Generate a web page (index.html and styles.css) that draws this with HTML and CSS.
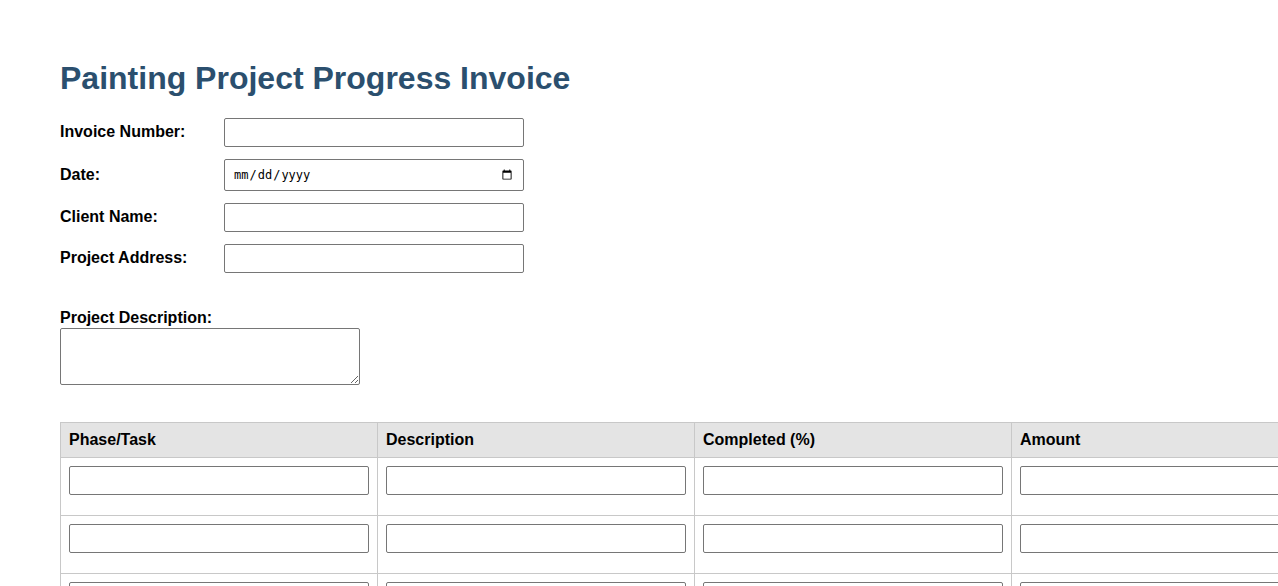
FILE: index.html
```html
<!DOCTYPE html>
<html lang="en">
<head>
<meta charset="utf-8">
<title>Painting Project Progress Invoice</title>
<link rel="stylesheet" href="styles.css">
</head>
<body>
<div class="page">
  <h1 class="title">Painting Project Progress Invoice</h1>
  <div class="field-row">
    <label class="field-label" for="inv">Invoice Number:</label>
    <input class="field-input" id="inv" type="text">
  </div>
  <div class="field-row">
    <label class="field-label date-label" for="date">Date:</label>
    <input class="field-input date-input" id="date" type="date">
  </div>
  <div class="field-row">
    <label class="field-label" for="client">Client Name:</label>
    <input class="field-input" id="client" type="text">
  </div>
  <div class="field-row">
    <label class="field-label" for="addr">Project Address:</label>
    <input class="field-input" id="addr" type="text">
  </div>
  <div class="desc-group">
    <label class="desc-label" for="desc">Project Description:</label>
    <textarea class="desc-area" id="desc"></textarea>
  </div>
  <table class="tasks">
    <thead>
      <tr>
        <th>Phase/Task</th>
        <th>Description</th>
        <th>Completed (%)</th>
        <th>Amount</th>
      </tr>
    </thead>
    <tbody>
      <tr>
        <td><input class="cell-input" type="text"></td>
        <td><input class="cell-input" type="text"></td>
        <td><input class="cell-input" type="text"></td>
        <td><input class="cell-input" type="text"></td>
      </tr>
      <tr>
        <td><input class="cell-input" type="text"></td>
        <td><input class="cell-input" type="text"></td>
        <td><input class="cell-input" type="text"></td>
        <td><input class="cell-input" type="text"></td>
      </tr>
      <tr>
        <td><input class="cell-input" type="text"></td>
        <td><input class="cell-input" type="text"></td>
        <td><input class="cell-input" type="text"></td>
        <td><input class="cell-input" type="text"></td>
      </tr>
    </tbody>
  </table>
</div>
</body>
</html>
```
FILE: styles.css
```css
html, body {
  margin: 0;
  padding: 0;
  background: #ffffff;
}
body {
  font-family: "Liberation Sans", Arial, sans-serif;
  font-size: 16px;
  color: #000;
}
.page {
  padding: 60px 60px 40px;
}
.title {
  margin: 0 0 21px;
  font-size: 32px;
  font-weight: bold;
  color: #2b4f6e;
  line-height: 37px;
}
.field-row {
  display: flex;
  align-items: center;
  margin-bottom: 12px;
}
.field-label {
  width: 164px;
  flex: none;
  font-weight: bold;
  font-size: 16px;
  line-height: 18px;
  padding-bottom: 2px;
}
.date-label {
  padding-bottom: 0;
}
.field-input {
  box-sizing: border-box;
  width: 300px;
  height: 29px;
  margin: 0;
  padding: 5px 8px;
  border: 1px solid #767676;
  border-radius: 2px;
  font-family: "Liberation Sans", Arial, sans-serif;
  font-size: 13.33px;
  background: #fff;
}
.date-input {
  height: 32px;
  padding: 5px 8px;
  font-family: "DejaVu Sans Mono", "Liberation Mono", monospace;
  font-size: 12px;
  color: #000;
}
.desc-group {
  margin-top: 36px;
}
.desc-label {
  display: block;
  font-weight: bold;
  font-size: 16px;
  line-height: 18px;
  margin-bottom: 1px;
}
.desc-area {
  display: block;
  box-sizing: border-box;
  width: 300px;
  height: 57px;
  margin: 0;
  border: 1px solid #767676;
  border-radius: 2px;
  resize: vertical;
  font-family: "Liberation Sans", Arial, sans-serif;
}
.tasks {
  margin-top: 37px;
  border-collapse: collapse;
}
.tasks th,
.tasks td {
  border: 1px solid #c8c8c8;
  padding: 8px;
  text-align: left;
  vertical-align: top;
}
.tasks th {
  background: #e4e4e4;
  font-weight: bold;
  font-size: 16px;
  line-height: 18px;
}
.cell-input {
  display: block;
  box-sizing: border-box;
  width: 300px;
  height: 29px;
  margin: 0 0 12px;
  border: 1px solid #767676;
  border-radius: 2px;
  background: #fff;
}
```
